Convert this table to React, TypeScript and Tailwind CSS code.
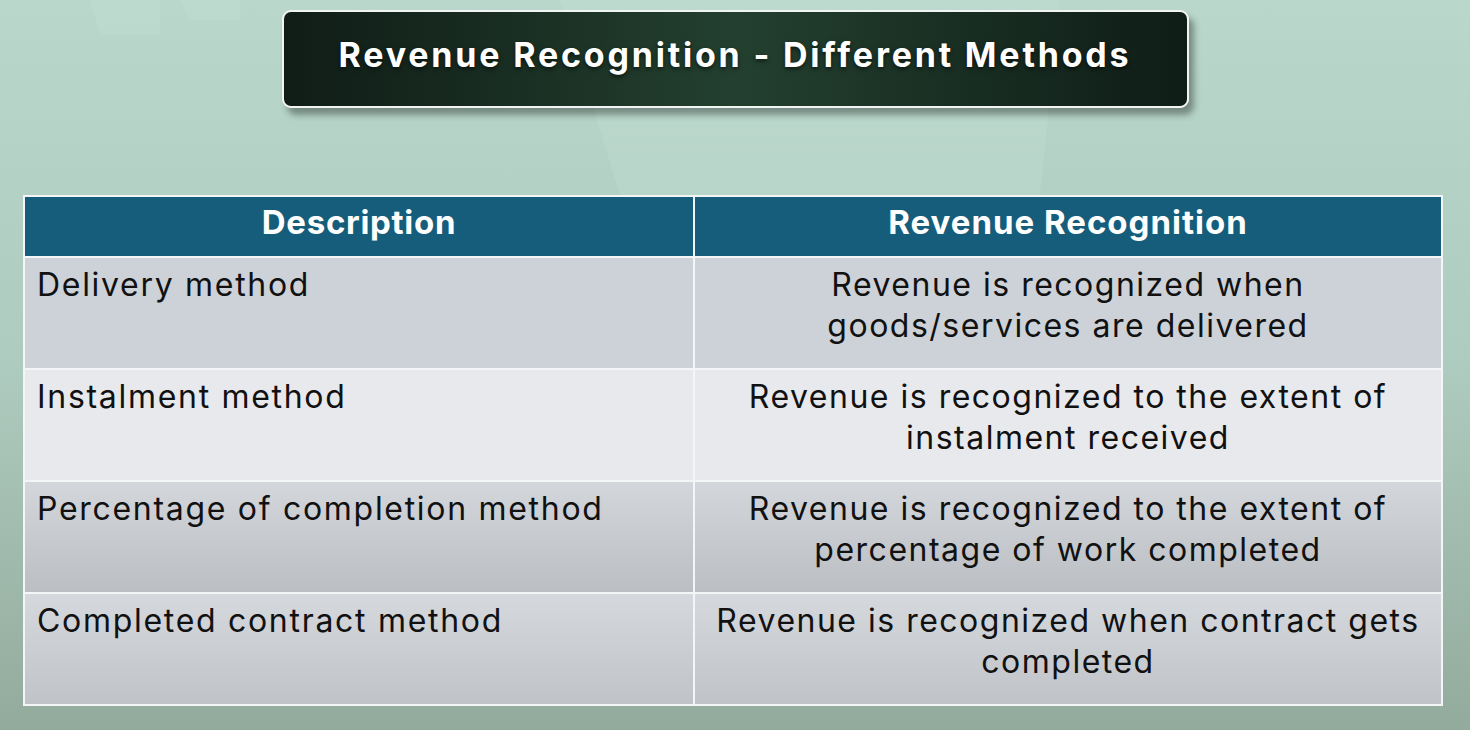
import React from 'react';

const rows = [
    { desc: 'Delivery method', rec: ['Revenue is recognized when', 'goods/services are delivered'], bg: 'bg-[#cdd1d8]' },
    { desc: 'Instalment method', rec: ['Revenue is recognized to the extent of', 'instalment received'], bg: 'bg-[#e8e9ec]' },
    { desc: 'Percentage of completion method', rec: ['Revenue is recognized to the extent of', 'percentage of work completed'], bg: 'bg-gradient-to-b from-[#d3d6db] to-[#bbbec3]' },
    { desc: 'Completed contract method', rec: ['Revenue is recognized when contract gets', 'completed'], bg: 'bg-gradient-to-b from-[#d5d8dc] to-[#c0c3c7]' },
];

const font = { fontFamily: '"Inter", "Noto Sans", sans-serif' };

export default function App() {
    return (
        <div className="relative w-[1470px] h-[730px] overflow-hidden bg-gradient-to-b from-[#b9d7cb] via-[#aecbbf] to-[#93ab9d]" style={font}>
            {/* faint background shapes */}
            <svg className="absolute inset-0 pointer-events-none" width="1470" height="730">
                <polygon points="560,0 1060,0 1040,195 620,195" fill="#c4e0d5" opacity="0.35" />
                <polygon points="90,0 160,0 160,35 100,35" fill="#c6e0d6" opacity="0.3" />
                <polygon points="180,0 240,0 240,20 190,20" fill="#c6e0d6" opacity="0.3" />
            </svg>

            <div className="relative flex flex-col items-center">
                <div className="mt-[10px] w-[907px] h-[98px] rounded-[9px] border-2 border-[#f2f4f3] bg-gradient-to-r from-[#101d17] via-[#23402f] to-[#0f1d17] shadow-[5px_7px_6px_rgba(40,50,45,0.45)] flex items-center justify-center pb-[9px]">
                    <h1 className="text-white text-[34px] font-bold tracking-[2.8px] [text-shadow:0_2px_4px_rgba(0,0,0,0.6)]">
                        Revenue Recognition - Different Methods
                    </h1>
                </div>
            </div>

            <div className="relative ml-[23px] mt-[87px] w-[1420px] bg-[#f4f5f6] p-[2px] grid grid-cols-[668px_746px] gap-[2px]">
                <div className="h-[59px] bg-[#165d7c] flex items-center justify-center pb-[7px] text-white text-[33px] font-bold tracking-[0.7px]">Description</div>
                <div className="h-[59px] bg-[#165d7c] flex items-center justify-center pb-[7px] text-white text-[33px] font-bold tracking-[1px]">Revenue Recognition</div>
                {rows.map((r) => (
                    <React.Fragment key={r.desc}>
                        <div className={`h-[110px] ${r.bg} pl-[12px] pt-[6px] text-[32px] leading-[41px] tracking-[1.7px] text-[#111]`}>{r.desc}</div>
                        <div className={`h-[110px] ${r.bg} pt-[6px] text-[32px] leading-[41px] tracking-[1.5px] text-[#111] text-center`}>
                            {r.rec.map((l) => (
                                <div key={l}>{l}</div>
                            ))}
                        </div>
                    </React.Fragment>
                ))}
            </div>
        </div>
    );
}
